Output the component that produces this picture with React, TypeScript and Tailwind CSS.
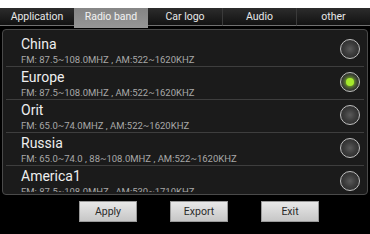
import React from "react";

const tabs = ["Application", "Radio band", "Car logo", "Audio", "other"];
const rows = [
  { name: "China", sub: "FM: 87.5~108.0MHZ , AM:522~1620KHZ", on: false },
  { name: "Europe", sub: "FM: 87.5~108.0MHZ , AM:522~1620KHZ", on: true },
  { name: "Orit", sub: "FM: 65.0~74.0MHZ , AM:522~1620KHZ", on: false },
  { name: "Russia", sub: "FM: 65.0~74.0 , 88~108.0MHZ , AM:522~1620KHZ", on: false },
  { name: "America1", sub: "FM: 87.5~108.0MHZ , AM:530~1710KHZ", on: false },
];

function Radio({ on }: { on: boolean }) {
  return (
    <div className="w-[20px] h-[20px] rounded-full border border-[#c0c0c0] bg-[radial-gradient(circle,#5a5a5a_0%,#3c3c3c_45%,#262626_100%)] flex items-center justify-center shrink-0">
      {on && (
        <div className="w-[8px] h-[8px] rounded-full bg-[#a6ea2c] shadow-[0_0_4px_1px_#7fc21a]" />
      )}
    </div>
  );
}

export default function App() {
  return (
    <div
      className="w-[370px] h-[234px] bg-black flex flex-col overflow-hidden"
      style={{ fontFamily: "Roboto, 'Liberation Sans', sans-serif" }}
    >
      <div className="h-[8px] bg-white shrink-0" />
      <div className="h-[20px] flex shrink-0">
        {tabs.map((t, i) =>
          i === 1 ? (
            <div
              key={t}
              className="w-[74px] h-[20px] bg-[linear-gradient(#858585,#969696)] text-[#f2f2f2] text-[10.5px] flex items-center justify-center pb-[2px]"
            >
              {t}
            </div>
          ) : (
            <div
              key={t}
              className={`${i === 4 ? "flex-1" : "w-[74px]"} h-[18px] bg-[linear-gradient(#2c2c2c,#121212)] border-b-[1px] border-b-[#707070] ${i > 2 ? "border-l border-l-[#3a3a3a]" : ""} text-[#e8e8e8] text-[10.5px] flex items-center justify-center`}
            >
              {t}
            </div>
          )
        )}
      </div>
      <div className="h-[1px] shrink-0" />
      <div className="mx-[2px] h-[166px] rounded-[4px] border border-[#4a4a4a] bg-[#1b1b1b] overflow-hidden shrink-0 pt-[4px]">
        <div className="h-[158px] overflow-hidden">
          {rows.map((r) => (
            <div
              key={r.name}
              className="h-[33px] border-b border-b-[#3e3e3e] mx-[3px] pl-[15px] pr-[4px] flex items-center"
            >
              <div className="flex-1 flex flex-col self-start pt-[2px]">
                <div className="text-[14px] leading-[16px] text-[#eeeeee]">{r.name}</div>
                <div className="text-[9.5px] leading-[11px] mt-[2px] text-[#a8a8a8] whitespace-nowrap">{r.sub}</div>
              </div>
              <div className="mb-[2px]">
                <Radio on={r.on} />
              </div>
            </div>
          ))}
        </div>
      </div>
      <div className="flex pl-[79px] gap-[33px] mt-[6px]">
        {["Apply", "Export", "Exit"].map((b) => (
          <div
            key={b}
            className="w-[58px] h-[21px] bg-[linear-gradient(#e8e8e8,#c6c6c6)] border border-[#9a9a9a] text-[#2a2a2a] text-[10.5px] flex items-center justify-center"
          >
            {b}
          </div>
        ))}
      </div>
    </div>
  );
}
